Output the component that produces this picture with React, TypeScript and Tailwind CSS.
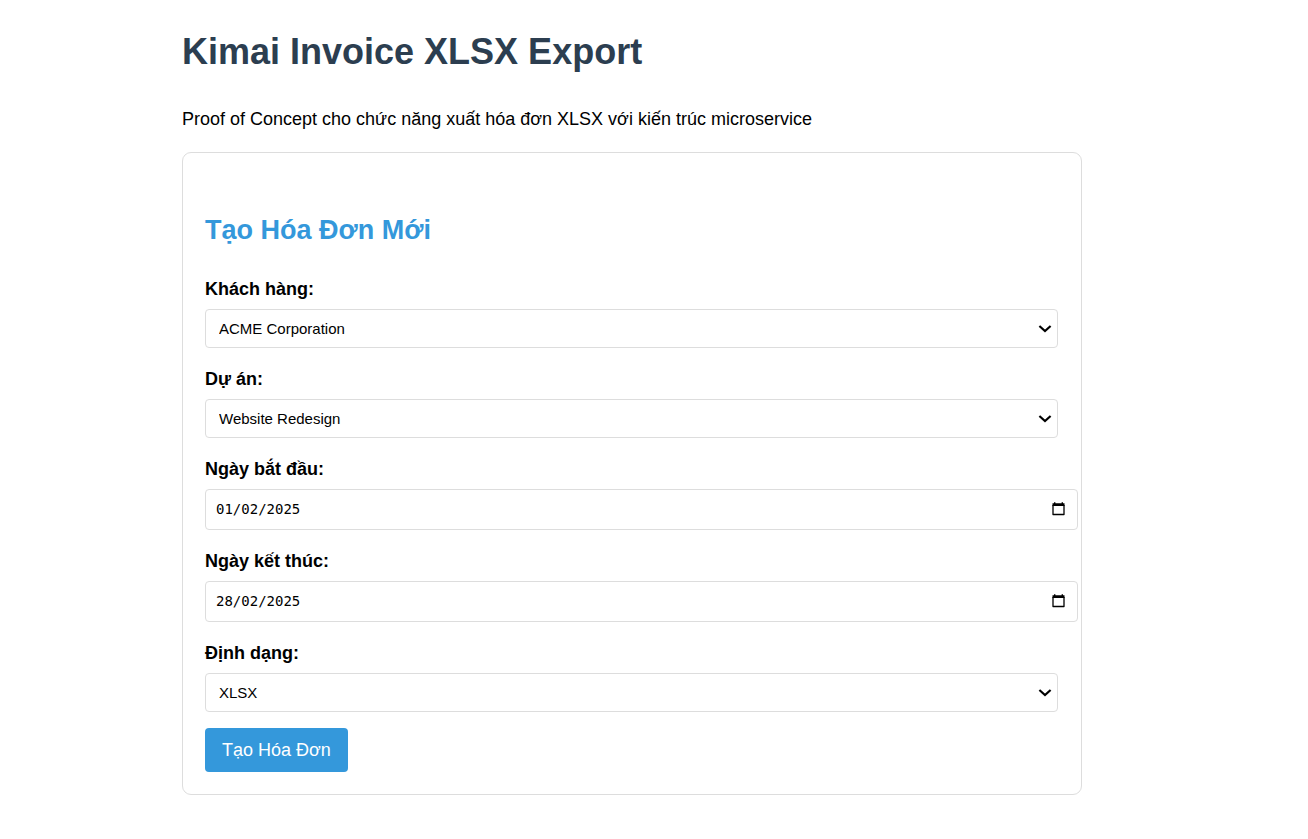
import { useState } from "react";

const labelClass = "mb-[10px] block font-bold leading-5";
const controlClass =
  "rounded border border-[#dddddd] bg-white text-black outline-none focus:border-[#3498db]";

type SelectFieldProps = {
  id: string;
  label: string;
  options: string[];
};

function ChevronIcon() {
  return (
    <svg
      width="14"
      height="8"
      viewBox="0 0 14 8"
      fill="none"
      aria-hidden="true"
      className="pointer-events-none absolute right-1.5 top-4"
    >
      <path d="M1.4 1 7 6l5.6-5" stroke="black" strokeWidth="2.2" />
    </svg>
  );
}

function SelectField({ id, label, options }: SelectFieldProps) {
  return (
    <div>
      <label htmlFor={id} className={labelClass}>
        {label}
      </label>
      <div className="relative">
        <select
          id={id}
          className={`${controlClass} block h-[39px] w-full appearance-none pl-[13px] pr-8 text-[15px]`}
        >
          {options.map((option) => (
            <option key={option}>{option}</option>
          ))}
        </select>
        <ChevronIcon />
      </div>
    </div>
  );
}

function CalendarIcon() {
  return (
    <svg width="13" height="14" viewBox="0 0 13 14" fill="none" aria-hidden="true">
      <path d="M1 3v9.5h11V3" stroke="black" strokeWidth="1.3" strokeLinejoin="round" />
      <path d="M0.5 1.2h12V4h-12zM2 0.2h1.4v1.5H2zM9.6 0.2H11v1.5H9.6z" fill="black" />
    </svg>
  );
}

type DateFieldProps = {
  id: string;
  label: string;
  initial: string;
};

function DateField({ id, label, initial }: DateFieldProps) {
  const [value, setValue] = useState(initial);
  return (
    <div>
      <label htmlFor={id} className={labelClass}>
        {label}
      </label>
      <div className={`${controlClass} -mr-5 flex h-[41px] items-center pb-0.5 pl-[10px] pr-3`}>
        <input
          id={id}
          type="text"
          inputMode="numeric"
          value={value}
          onChange={(event) => setValue(event.target.value)}
          className="h-full min-w-0 flex-1 bg-transparent font-['DejaVu_Sans_Mono',monospace] text-[14px] outline-none"
        />
        <button type="button" aria-label={`Chọn ${label}`}>
          <CalendarIcon />
        </button>
      </div>
    </div>
  );
}

export default function App() {
  return (
    <div className="min-h-screen bg-white pr-11 font-['Liberation_Sans',Arial,sans-serif] text-lg text-black">
      <main className="mx-auto max-w-[900px] pb-11 pt-[31px]">
        <h1 className="text-[36px] font-bold leading-[42px] text-[#2c3e50]">
          Kimai Invoice XLSX Export
        </h1>
        <p className="mt-9 leading-5">
          Proof of Concept cho chức năng xuất hóa đơn XLSX với kiến trúc microservice
        </p>
        <section className="mt-[23px] rounded-[9px] border border-[#dddddd] pb-[22px] pl-[22px] pr-[23px] pt-[61px]">
          <h2 className="text-[27px] font-bold leading-8 text-[#3498db]">Tạo Hóa Đơn Mới</h2>
          <form className="mt-[33px]" onSubmit={(event) => event.preventDefault()}>
            <div className="flex flex-col gap-[21px]">
              <SelectField
                id="customer"
                label="Khách hàng:"
                options={["ACME Corporation"]}
              />
              <SelectField id="project" label="Dự án:" options={["Website Redesign"]} />
              <DateField id="start-date" label="Ngày bắt đầu:" initial="01/02/2025" />
              <DateField id="end-date" label="Ngày kết thúc:" initial="28/02/2025" />
              <SelectField id="format" label="Định dạng:" options={["XLSX"]} />
            </div>
            <button
              type="submit"
              className="mt-4 block h-11 cursor-pointer rounded bg-[#3498db] px-[17px] text-white hover:bg-[#2980b9]"
            >
              Tạo Hóa Đơn
            </button>
          </form>
        </section>
      </main>
    </div>
  );
}
